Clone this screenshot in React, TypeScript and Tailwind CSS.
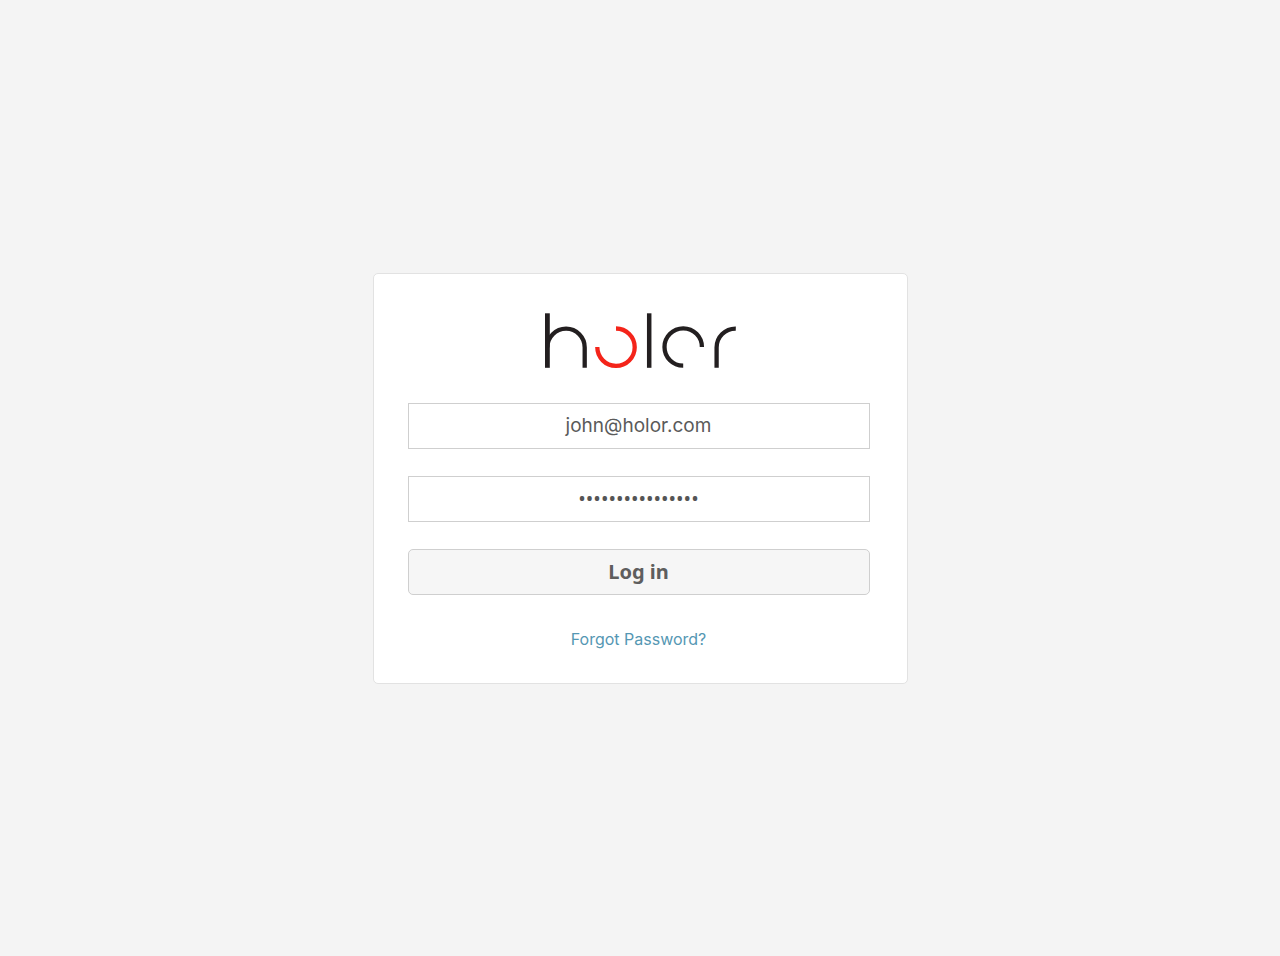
function Logo() {
  return (
    <svg
      role="img"
      aria-label="holor"
      className="block h-14 w-48"
      viewBox="0 0 192 56"
      fill="none"
      stroke="#231f20"
      strokeWidth="4.3"
    >
      <path d="M3.4 0.3V54.8" strokeWidth="4.8" />
      <path d="M3.3 34.6A18.8 18.8 0 0 1 22.1 15.7A18.8 18.8 0 0 1 40.7 34.6V54.8" />
      <path d="M72 15.5A18.7 18.7 0 1 1 53.3 34.1" stroke="#f4241a" />
      <path d="M105.2 0.3V54.8" strokeWidth="4.5" />
      <path d="M157.9 34.1A18.7 18.7 0 1 0 139.2 52.7" />
      <path d="M172.6 54.8V34.6A18.9 18.9 0 0 1 191.8 15.6" />
    </svg>
  );
}

export default function App() {
  return (
    <main className="flex min-h-screen items-center justify-center bg-[#f4f4f4] font-['Inter','Liberation_Sans',sans-serif]">
      <form
        className="flex w-full max-w-[535px] flex-col rounded-[5px] border border-[#e2e2e2] bg-white pt-[39px] pb-8"
        onSubmit={(event) => event.preventDefault()}
      >
        <div className="mb-[34px] flex justify-center">
          <Logo />
        </div>
        <div className="flex flex-col gap-[27px] pr-[37px] pl-[34px]">
          <input
            type="email"
            aria-label="Email"
            defaultValue="john@holor.com"
            className="h-[46px] w-full border border-[#cfcfcf] bg-white text-center text-[19px] text-[#5a5a5a] outline-none"
          />
          <input
            type="password"
            aria-label="Password"
            defaultValue="holorpassword123"
            className="h-[46px] w-full border border-[#cfcfcf] bg-white text-center font-['Noto_Sans',sans-serif] text-xl text-[#555555] outline-none"
          />
          <button
            type="submit"
            className="h-[46px] w-full rounded-[5px] border border-[#cfcfcf] bg-[#f6f6f6] font-['Noto_Sans',sans-serif] text-xl font-bold text-[#5e5e5e]"
          >
            Log in
          </button>
          <a href="#forgot" className="mt-[5px] self-center text-base leading-6 text-[#5597b3]">
            Forgot Password?
          </a>
        </div>
      </form>
    </main>
  );
}
